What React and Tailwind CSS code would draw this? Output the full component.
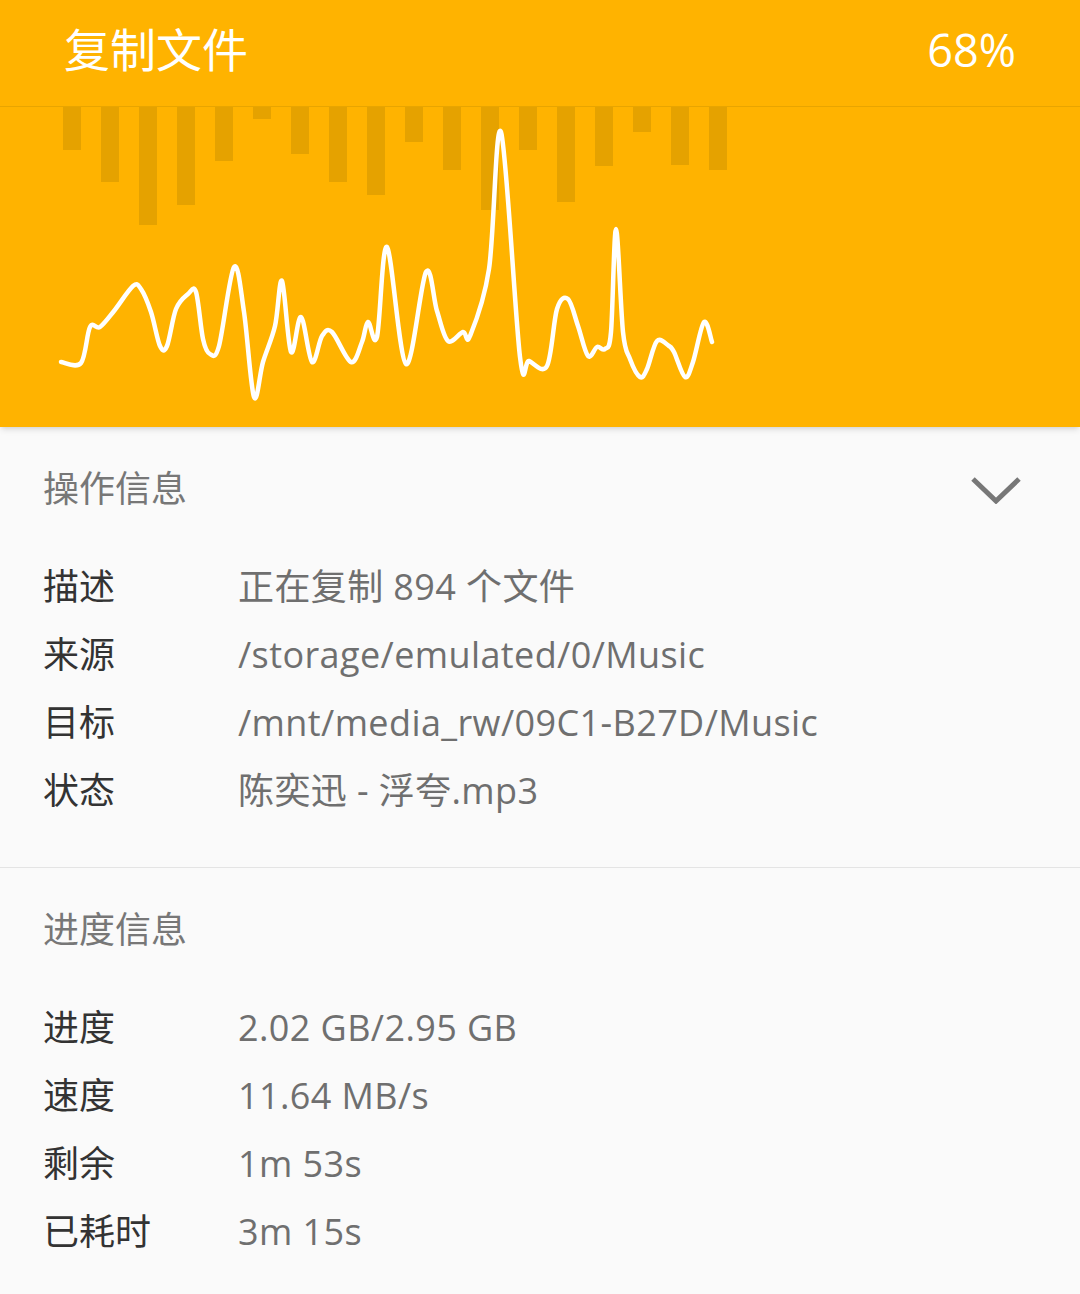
const BARS = [151, 183, 226, 206, 162, 120, 155, 183, 196, 143, 171, 211, 151, 203, 167, 133, 166, 171]

const WAVE = [
  [61, 363], [81, 364], [90, 328], [100, 328], [114, 312], [133, 287], [141, 290], [151, 313],
  [160, 347], [167, 347], [176, 310], [188, 295], [196, 293], [203, 340], [210, 355], [219, 347],
  [234, 268], [244, 313], [254, 398], [263, 363], [275, 327], [282, 282], [291, 353], [301, 318],
  [312, 363], [322, 337], [332, 333], [351, 363], [362, 343], [368, 323], [377, 338], [387, 248],
  [406, 365], [426, 273], [437, 312], [448, 342], [463, 333], [470, 337], [489, 270], [501, 133],
  [520, 358], [529, 362], [547, 367], [557, 310], [568, 300], [578, 327], [588, 357], [597, 348],
  [605, 350], [611, 333], [616, 230], [623, 333], [630, 360], [640, 378], [647, 370], [657, 342],
  [669, 347], [674, 353], [685, 378], [693, 363], [704, 323], [712, 343],
]

// catmull-rom -> cubic bezier
function smoothPath(pts) {
  let d = `M${pts[0][0]},${pts[0][1]}`
  for (let i = 0; i < pts.length - 1; i++) {
    const p0 = pts[i - 1] || pts[i]
    const p1 = pts[i]
    const p2 = pts[i + 1]
    const p3 = pts[i + 2] || p2
    const c1x = p1[0] + (p2[0] - p0[0]) / 6
    const c1y = p1[1] + (p2[1] - p0[1]) / 6
    const c2x = p2[0] - (p3[0] - p1[0]) / 6
    const c2y = p2[1] - (p3[1] - p1[1]) / 6
    d += ` C${c1x.toFixed(1)},${c1y.toFixed(1)} ${c2x.toFixed(1)},${c2y.toFixed(1)} ${p2[0]},${p2[1]}`
  }
  return d
}

const OP_ROWS = [
  ['描述', '正在复制 894 个文件'],
  ['来源', '/storage/emulated/0/Music'],
  ['目标', '/mnt/media_rw/09C1-B27D/Music'],
  ['状态', '陈奕迅 - 浮夸.mp3'],
]

const PROGRESS_ROWS = [
  ['进度', '2.02 GB/2.95 GB'],
  ['速度', '11.64 MB/s'],
  ['剩余', '1m 53s'],
  ['已耗时', '3m 15s'],
]

const FONT = { fontFamily: '"Open Sans", "Noto Sans CJK SC", sans-serif' }

function InfoRow({ label, value }) {
  return (
    <div className="flex items-center h-[68px] px-[43px] text-[36px] leading-none">
      <span className="w-[195px] shrink-0 text-[#333333]">{label}</span>
      <span className="text-[#6f6f6f] whitespace-nowrap tracking-[0.4px]">{value}</span>
    </div>
  )
}

export default function App() {
  return (
    <div className="w-[1080px] h-[1294px] bg-[#fafafa] overflow-hidden" style={FONT}>
      <div className="relative z-10 bg-[#ffb300] shadow-md">
        <div className="flex items-center justify-between h-[107px] px-[64px] pb-[8px] border-b border-[#e8a500] text-white">
          <span className="text-[46px] leading-none">复制文件</span>
          <span className="text-[45px] leading-none">68%</span>
        </div>
        <svg width="1080" height="320" viewBox="0 108 1080 320" className="block">
          {BARS.map((b, i) => (
            <rect key={i} x={63 + i * 38} y={108} width={18} height={b - 108} fill="#e5a200" />
          ))}
          <path
            d={smoothPath(WAVE)}
            fill="none"
            stroke="#ffffff"
            strokeWidth="4.5"
            strokeLinejoin="round"
            strokeLinecap="round"
          />
        </svg>
      </div>

      <div className="pt-[30px] pb-[42px] border-b border-[#e4e4e4]">
        <div className="flex items-center justify-between h-16 pl-[43px] pr-[58px]">
          <span className="text-[36px] leading-none text-[#777777]">操作信息</span>
          <svg width="52" height="30" viewBox="0 0 52 30">
            <polyline points="3,5 26,27 49,5" fill="none" stroke="#777777" strokeWidth="5" />
          </svg>
        </div>
        <div className="mt-8">
          {OP_ROWS.map(([l, v]) => (
            <InfoRow key={l} label={l} value={v} />
          ))}
        </div>
      </div>

      <div className="pt-[30px]">
        <div className="flex items-center h-16 px-[43px]">
          <span className="text-[36px] leading-none text-[#777777]">进度信息</span>
        </div>
        <div className="mt-8">
          {PROGRESS_ROWS.map(([l, v]) => (
            <InfoRow key={l} label={l} value={v} />
          ))}
        </div>
      </div>
    </div>
  )
}
